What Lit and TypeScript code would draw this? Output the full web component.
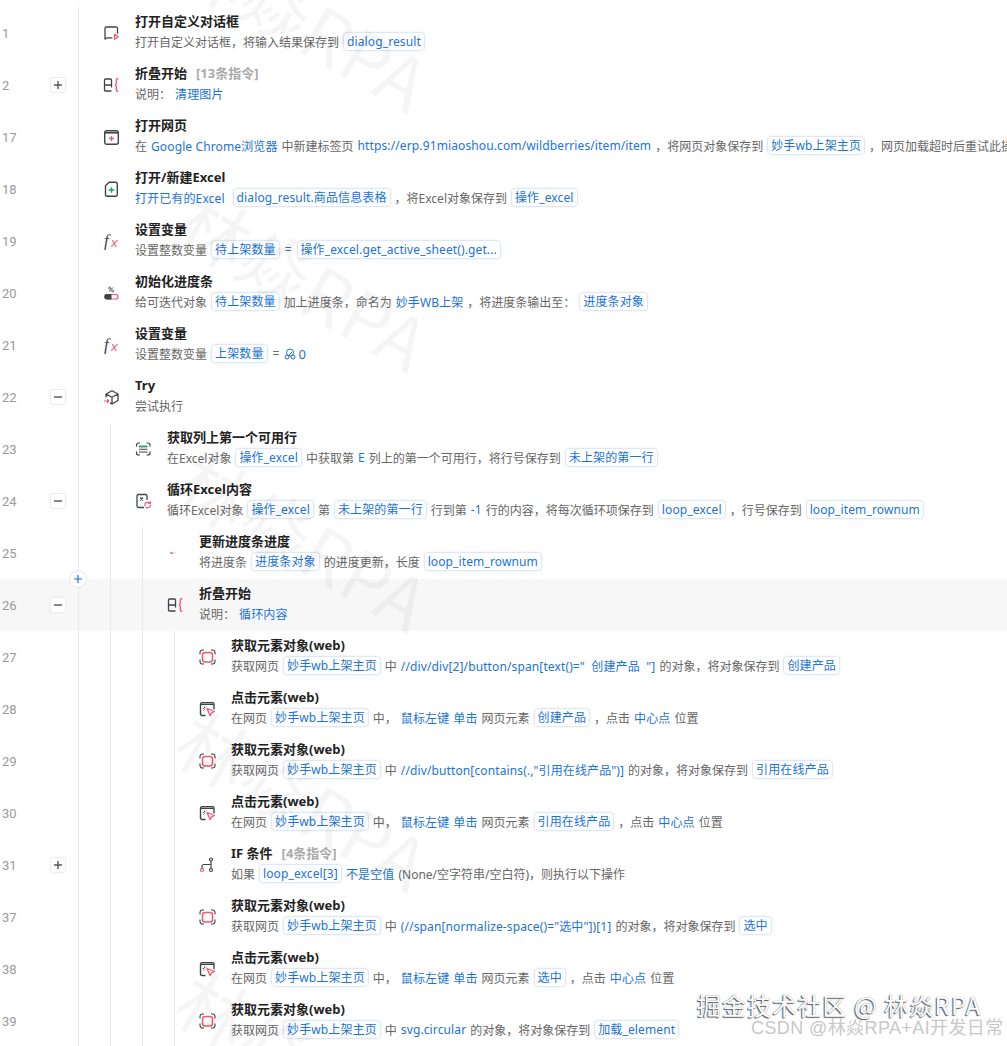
import { LitElement, html, css, svg, TemplateResult } from "lit";
import { customElement } from "lit/decorators.js";

const D = "#3f444b";
const R = "#ee5a6f";
const G = "#10a36c";

const icons: Record<string, TemplateResult> = {
  dialog: svg`<path d="M2 14V3.500a1.500 1.500 0 0 1 1.500-1.500h9A1.500 1.500 0 0 1 14.500 3.500V8M2.300 14l1.700-1.200H9" fill="none" stroke="${D}" stroke-width="1.300" stroke-linecap="round" stroke-linejoin="round"/><path d="M11.500 9.200l3.800 2.500-3.800 2.600z" fill="none" stroke="${R}" stroke-width="1.300" stroke-linejoin="round"/>`,
  fold: svg`<path d="M8.500 8V3a1 1 0 0 0-1-1H2.500a1 1 0 0 0-1 1v10a1 1 0 0 0 1 1h6M1.500 8h7v2.500" fill="none" stroke="${D}" stroke-width="1.300" stroke-linejoin="round"/><path d="M15.300 1.500c-1.600 0-2 .8-2 2V6c0 1-.5 1.800-1.400 2 .9.2 1.400 1 1.400 2v2.500c0 1.200.4 2 2 2" fill="none" stroke="${R}" stroke-width="1.300"/>`,
  web: svg`<rect x="1.700" y="1.700" width="13.600" height="13.600" rx="2" fill="none" stroke="${D}" stroke-width="1.400"/><path d="M2 3.800h13" stroke="${D}" stroke-width="1.600"/><path d="M8.500 7v5M6 9.500h5" stroke="${R}" stroke-width="1.400"/>`,
  file: svg`<path d="M6 1.200h6.800a1.500 1.500 0 0 1 1.500 1.500v11.100a1.500 1.500 0 0 1-1.500 1.500H4a1.500 1.500 0 0 1-1.500-1.500V4.700z" fill="none" stroke="${D}" stroke-width="1.400" stroke-linejoin="round"/><path d="M8.500 6.200v5.600M5.700 9h5.600" stroke="${G}" stroke-width="1.500"/>`,
  fx: svg`<text x="1" y="13" font-family="Liberation Serif, serif" font-style="italic" font-size="17" fill="${D}">f</text><text x="8" y="14" font-family="Liberation Sans, sans-serif" font-style="italic" font-size="13" fill="${R}">x</text>`,
  progress: svg`<path d="M9.800 2.500l-3.600 4" stroke="${D}" stroke-width=".9"/><circle cx="6.600" cy="3.100" r="1" fill="none" stroke="${D}" stroke-width=".8"/><circle cx="9.600" cy="6" r="1" fill="none" stroke="${D}" stroke-width=".8"/><rect x="2" y="9.500" width="13" height="4.500" rx="2.200" fill="none" stroke="${R}" stroke-width="1.200"/><path d="M4 9h4.500v5.500H4a2.700 2.700 0 0 1 0-5.500z" fill="${D}"/>`,
  cube: svg`<path d="M3 5l6-3.300 6 3.300v6.500l-6 3.500-2-1.100M3 5v3.500M3 5l6 3.300 6-3.300M9 8.300V15" fill="none" stroke="${D}" stroke-width="1.300" stroke-linejoin="round"/><path d="M1 12h4.500M4 10.300L5.800 12 4 13.700" fill="none" stroke="${R}" stroke-width="1.200"/>`,
  list: svg`<path d="M1.500 5.500V4a2 2 0 0 1 2-2h1.500M11.500 2H13a2 2 0 0 1 2 2v1.500M1.500 10.500V12a2 2 0 0 0 2 2h1.500M11.500 14H13a2 2 0 0 0 2-2v-1.500" fill="none" stroke="${D}" stroke-width="1.200"/><path d="M4 5.500h8.500" stroke="${G}" stroke-width="1.800"/><path d="M4 8.300h8.500M4 11h8.500" stroke="${D}" stroke-width="1.100"/>`,
  loop: svg`<path d="M9 14.500H3.500A1.500 1.500 0 0 1 2 13V3a1.500 1.500 0 0 1 1.500-1.500h7A1.500 1.500 0 0 1 12 3v4" fill="none" stroke="${D}" stroke-width="1.300"/><path d="M5 4.500l3 3M8 4.500l-3 3" stroke="${D}" stroke-width="1.100"/><path d="M10 13a3 3 0 0 1 5-3M15.500 11.500a3 3 0 0 1-5 2.500" fill="none" stroke="${R}" stroke-width="1.200"/><path d="M15.500 8.200v2.300h-2.300" fill="none" stroke="${R}" stroke-width="1"/>`,
  dash: svg`<path d="M3 8h3.500" stroke="#d9263f" stroke-width="1"/><path d="M8 7.500h1" stroke="#d8d8d8" stroke-width="1"/>`,
  element: svg`<rect x="3.500" y="3.500" width="10" height="9.500" rx="2.500" fill="none" stroke="${R}" stroke-width="1.500"/><path d="M1 5.500V3.500a2.500 2.500 0 0 1 2.500-2.500h1.500M12 1h1.500A2.500 2.500 0 0 1 16 3.500v2M1 10.500v2A2.500 2.500 0 0 0 3.500 15h1.500M12 15h1.500a2.500 2.500 0 0 0 2.500-2.500v-2" fill="none" stroke="${D}" stroke-width="1.100"/>`,
  click: svg`<path d="M6.500 14.500H3a1.500 1.500 0 0 1-1.500-1.500V3.300A1.500 1.500 0 0 1 3 1.800h10.500A1.500 1.500 0 0 1 15 3.300v5" fill="none" stroke="${D}" stroke-width="1.400"/><path d="M2 3.500h13" stroke="${D}" stroke-width="1"/><path d="M5.500 5.500v1.500M3.800 7.500h1.400M4.500 9.500l1-1M7.500 5.800l-.8.8" stroke="${D}" stroke-width=".9"/><path d="M8 7.500l7.500 3-3 1.300-1.300 3z" fill="#fff" stroke="${R}" stroke-width="1.300" stroke-linejoin="round"/>`,
  branch: svg`<circle cx="12" cy="2.500" r="1.500" fill="none" stroke="${D}" stroke-width="1.200"/><circle cx="12" cy="13" r="1.500" fill="none" stroke="${D}" stroke-width="1.200"/><circle cx="3" cy="13" r="1.500" fill="none" stroke="${R}" stroke-width="1.200"/><path d="M12 4v7.500M12 7.500H5a2 2 0 0 0-2 2v2" fill="none" stroke="${D}" stroke-width="1.200"/>`,
};

const x = (s: string) => html`<span>${s}</span>`;
const b = (s: string) => html`<span class="blue">${s}</span>`;
const c = (s: string) => html`<span class="chip">${s}</span>`;
const eq = html`<span class="eq">=</span>`;
const sp = html`<span class="sp"></span>`;

interface Row {
  n: number;
  lv: number;
  exp?: string;
  icon: string;
  title: string;
  note?: string;
  sub: TemplateResult;
  hl?: boolean;
}

const PAGE = "妙手wb上架主页";
const getEl = (path: string, out: string) =>
  html`${x("获取网页")}${c(PAGE)}${x("中")}${b(path)}${x("的对象，将对象保存到")}${c(out)}`;
const clickEl = (target: string) =>
  html`${x("在网页")}${c(PAGE)}${x("中，")}${b("鼠标左键")}${b("单击")}${x("网页元素")}${c(target)}${x("，点击")}${b("中心点")}${x("位置")}`;

const rows: Row[] = [
  { n: 1, lv: 0, icon: "dialog", title: "打开自定义对话框", sub: html`${x("打开自定义对话框，将输入结果保存到")}${c("dialog_result")}` },
  { n: 2, lv: 0, exp: "+", icon: "fold", title: "折叠开始", note: "[13条指令]", sub: html`${x("说明：")}${b("清理图片")}` },
  { n: 17, lv: 0, icon: "web", title: "打开网页", sub: html`${x("在")}${b("Google Chrome浏览器")}${x("中新建标签页")}${b("https://erp.91miaoshou.com/wildberries/item/item")}${x("，将网页对象保存到")}${c(PAGE)}${x("，网页加载超时后重试此操作")}` },
  { n: 18, lv: 0, icon: "file", title: "打开/新建Excel", sub: html`${b("打开已有的Excel")}${sp}${c("dialog_result.商品信息表格")}${x("，将Excel对象保存到")}${c("操作_excel")}` },
  { n: 19, lv: 0, icon: "fx", title: "设置变量", sub: html`${x("设置整数变量")}${c("待上架数量")}${eq}${c("操作_excel.get_active_sheet().get...")}` },
  { n: 20, lv: 0, icon: "progress", title: "初始化进度条", sub: html`${x("给可迭代对象")}${c("待上架数量")}${x("加上进度条，命名为")}${b("妙手WB上架")}${x("，将进度条输出至：")}${c("进度条对象")}` },
  { n: 21, lv: 0, icon: "fx", title: "设置变量", sub: html`${x("设置整数变量")}${c("上架数量")}${eq}<svg class="mini" viewBox="0 0 12 12"><circle cx="6" cy="4.500" r="3.500" fill="none" stroke="#1a73d9"/><circle cx="3" cy="9" r="2" fill="none" stroke="#1a73d9"/><circle cx="9" cy="9" r="2" fill="none" stroke="#1a73d9"/><path d="M4 8l4-4" stroke="#1a73d9"/></svg><span class="blue zero">0</span>` },
  { n: 22, lv: 0, exp: "-", icon: "cube", title: "Try", sub: x("尝试执行") },
  { n: 23, lv: 1, icon: "list", title: "获取列上第一个可用行", sub: html`${x("在Excel对象")}${c("操作_excel")}${x("中获取第")}${b("E")}${x("列上的第一个可用行，将行号保存到")}${c("未上架的第一行")}` },
  { n: 24, lv: 1, exp: "-", icon: "loop", title: "循环Excel内容", sub: html`${x("循环Excel对象")}${c("操作_excel")}${x("第")}${c("未上架的第一行")}${x("行到第")}${b("-1")}${x("行的内容，将每次循环项保存到")}${c("loop_excel")}${x("，行号保存到")}${c("loop_item_rownum")}` },
  { n: 25, lv: 2, icon: "dash", title: "更新进度条进度", sub: html`${x("将进度条")}${c("进度条对象")}${x("的进度更新，长度")}${c("loop_item_rownum")}` },
  { n: 26, lv: 2, exp: "-", icon: "fold", title: "折叠开始", hl: true, sub: html`${x("说明：")}${b("循环内容")}` },
  { n: 27, lv: 3, icon: "element", title: "获取元素对象(web)", sub: getEl('//div/div[2]/button/span[text()="  创建产品  "]', "创建产品") },
  { n: 28, lv: 3, icon: "click", title: "点击元素(web)", sub: clickEl("创建产品") },
  { n: 29, lv: 3, icon: "element", title: "获取元素对象(web)", sub: getEl('//div/button[contains(.,"引用在线产品")]', "引用在线产品") },
  { n: 30, lv: 3, icon: "click", title: "点击元素(web)", sub: clickEl("引用在线产品") },
  { n: 31, lv: 3, exp: "+", icon: "branch", title: "IF 条件", note: "[4条指令]", sub: html`${x("如果")}${c("loop_excel[3]")}${b("不是空值")}${x("(None/空字符串/空白符)，则执行以下操作")}` },
  { n: 37, lv: 3, icon: "element", title: "获取元素对象(web)", sub: getEl('(//span[normalize-space()="选中"])[1]', "选中") },
  { n: 38, lv: 3, icon: "click", title: "点击元素(web)", sub: clickEl("选中") },
  { n: 39, lv: 3, icon: "element", title: "获取元素对象(web)", sub: getEl("svg.circular", "加载_element") },
];

const marks = [-90, 170, 430, 690, 950];

@customElement("app-root")
export class AppRoot extends LitElement {
  static styles = css`
    :host {
      display: block;
      position: relative;
      height: 1046px;
      overflow: hidden;
      background: #fff;
      padding-top: 7px;
      box-sizing: border-box;
      font-family: "Noto Sans", "Noto Sans CJK SC", sans-serif;
      font-size: 12px;
      color: #666;
    }
    .row {
      display: flex;
      height: 52px;
      white-space: nowrap;
    }
    .hl { background: #f7f7f7; }
    .gutter {
      flex: 0 0 78px;
      display: flex;
      align-items: center;
      color: #9a9a9a;
      font-size: 13px;
      font-family: Roboto, sans-serif;
    }
    .num { flex: 0 0 50px; padding-left: 2px; box-sizing: border-box; }
    .exp {
      width: 16px;
      height: 16px;
      box-sizing: border-box;
      border: 1px solid #eeeeee;
      border-radius: 3px;
      background: #fff;
      box-shadow: 0 0 2px rgba(0,0,0,.06);
      display: flex;
      align-items: center;
      justify-content: center;
    }
    .exp svg { width: 10px; height: 10px; display: block; }
    .guide {
      flex: 0 0 31px;
      border-left: 1px solid #e9e9e9;
    }
    .last {
      flex: 0 0 24px;
      border-left: 1px solid #e9e9e9;
    }
    .icon {
      flex: 0 0 16px;
      height: 16px;
      margin-top: 18px;
      margin-right: 16px;
    }
    .icon svg { width: 16px; height: 16px; display: block; overflow: visible; }
    .body { flex: 1; min-width: 0; overflow: hidden; padding-top: 4px; }
    .title {
      height: 20px;
      line-height: 20px;
      font-size: 13px;
      font-weight: 700;
      color: #222;
      display: flex;
    }
    .note { color: #aaa; margin-left: 9px; font-weight: 700; font-size: 13px; }
    .sub {
      height: 21px;
      display: flex;
      align-items: center;
      gap: 4px;
    }
    .blue { color: #1a73d9; letter-spacing: .12px; white-space: pre; }
    .sp { width: 0; }
    .eq { padding: 0 1px; }
    .chip {
      color: #1a73d9;
      letter-spacing: .12px;
      border: 1px solid #dbe8f8;
      border-radius: 4px;
      padding: 0 3px;
      height: 17px;
      line-height: 17px;
      box-shadow: 0 0 2px rgba(26,115,217,.12);
    }
    .mini { width: 12px; height: 12px; flex: none; margin-right: -2px; }
    .zero { font-size: 13px; }
    .plus {
      position: absolute;
      left: 69px;
      top: 570px;
      width: 18px;
      height: 18px;
      box-sizing: border-box;
      border-radius: 50%;
      border: 1px solid #e3e6ec;
      background: #fff;
      display: flex;
      align-items: center;
      justify-content: center;
    }
    .plus svg { width: 10px; height: 10px; }
    .wm {
      position: absolute;
      left: 185px;
      font-family: "Noto Sans CJK SC", sans-serif;
      font-size: 72px;
      line-height: 80px;
      font-weight: 400;
      color: rgba(0,0,0,.04);
      transform: rotate(30deg);
      transform-origin: left center;
      pointer-events: none;
      white-space: nowrap;
    }
    .juejin {
      position: absolute;
      left: 697px;
      top: 990px;
      font-family: "Noto Sans CJK SC", sans-serif;
      font-size: 24px;
      line-height: 30px;
      color: #fff;
      letter-spacing: 1.1px;
      text-shadow: -1px 1px 1px #555, 0 0 1px #777;
      white-space: nowrap;
    }
    .csdn {
      position: absolute;
      left: 751px;
      top: 1015px;
      font-family: "Liberation Sans", "Noto Sans CJK SC", sans-serif;
      font-size: 18px;
      letter-spacing: .4px;
      line-height: 26px;
      color: #c8c8c8;
      white-space: nowrap;
    }
  `;

  private expander(k: string) {
    return html`<span class="exp"><svg viewBox="0 0 10 10"><path d="${k === "+" ? "M1 5h8M5 1v8" : "M1 5h8"}" stroke="#555" stroke-width="1.400"/></svg></span>`;
  }

  render() {
    return html`
      ${rows.map(
        (r) => html`
          <div class="row ${r.hl ? "hl" : ""}">
            <div class="gutter">
              <span class="num">${r.n}</span>
              ${r.exp ? this.expander(r.exp) : ""}
            </div>
            ${Array.from({ length: r.lv }, () => html`<div class="guide"></div>`)}
            <div class="last"></div>
            <div class="icon"><svg viewBox="0 0 16 16">${icons[r.icon]}</svg></div>
            <div class="body">
              <div class="title"><span>${r.title}</span>${r.note ? html`<span class="note">${r.note}</span>` : ""}</div>
              <div class="sub">${r.sub}</div>
            </div>
          </div>
        `
      )}
      <div class="plus"><svg viewBox="0 0 10 10"><path d="M1 5h8M5 1v8" stroke="#1a73d9" stroke-width="1.200"/></svg></div>
      ${marks.map((t) => html`<div class="wm" style="top:${t}px">林焱RPA</div>`)}
      <div class="juejin">掘金技术社区 @ 林焱RPA</div>
      <div class="csdn">CSDN @林焱RPA+AI开发日常</div>
    `;
  }
}
